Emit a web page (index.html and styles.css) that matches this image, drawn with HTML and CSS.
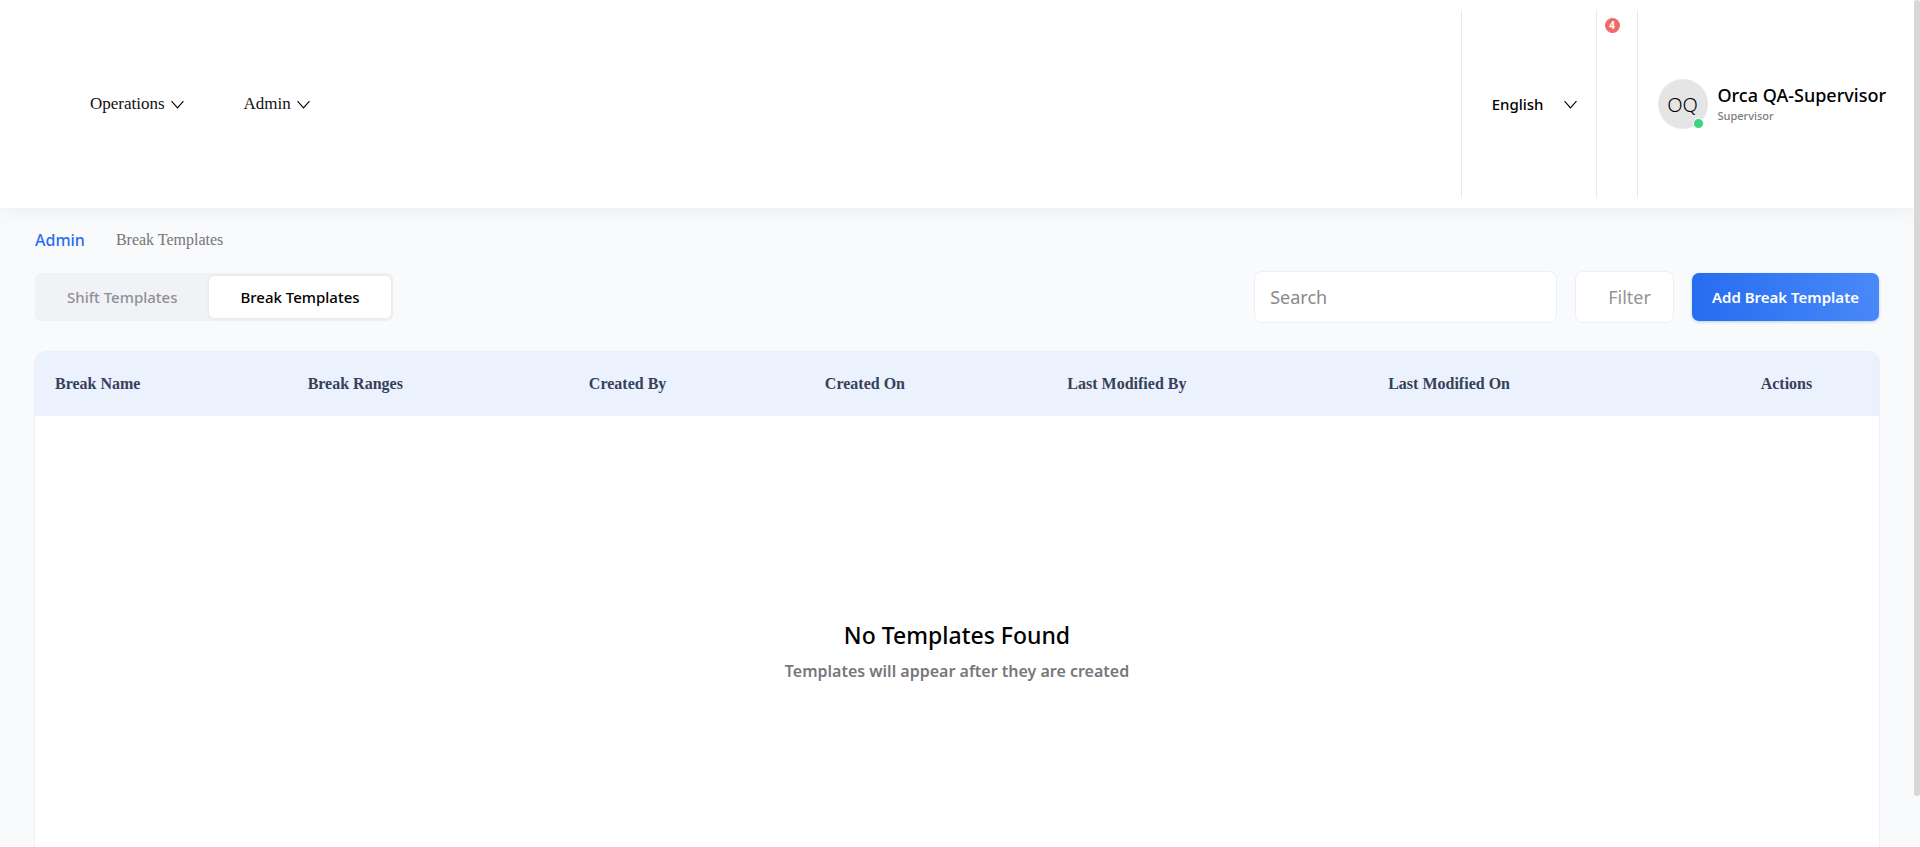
FILE: index.html
```html
<!DOCTYPE html>
<html lang="en">
<head>
<meta charset="utf-8">
<title>Break Templates</title>
<link rel="stylesheet" href="styles.css">
</head>
<body>
<header class="topbar">
  <nav class="nav">
    <button class="nav-item" type="button">Operations
      <svg class="chevron" viewBox="0 0 12 8" aria-hidden="true"><path d="M.5 .8 6 7.2 11.5 .8"/></svg>
    </button>
    <button class="nav-item" type="button">Admin
      <svg class="chevron" viewBox="0 0 12 8" aria-hidden="true"><path d="M.5 .8 6 7.2 11.5 .8"/></svg>
    </button>
  </nav>
  <div class="tools">
    <button class="language" type="button">English
      <svg class="chevron" viewBox="0 0 12 8" aria-hidden="true"><path d="M.5 .8 6 7.2 11.5 .8"/></svg>
    </button>
    <button class="alerts" type="button" aria-label="Notifications"><span class="alerts-count">4</span></button>
    <button class="profile" type="button">
      <span class="avatar">OQ<span class="status"></span></span>
      <span class="who">
        <span class="who-name">Orca QA-Supervisor</span>
        <span class="who-role">Supervisor</span>
      </span>
    </button>
  </div>
</header>
<main class="page">
  <nav class="crumbs" aria-label="Breadcrumb">
    <a class="crumb-link" href="#">Admin</a>
    <span class="crumb-current">Break Templates</span>
  </nav>
  <div class="toolbar">
    <div class="tabs" role="tablist">
      <button class="tab" type="button" role="tab" aria-selected="false">Shift Templates</button>
      <button class="tab tab-active" type="button" role="tab" aria-selected="true">Break Templates</button>
    </div>
    <div class="actions">
      <input class="search" type="text" placeholder="Search" aria-label="Search">
      <button class="filter" type="button">Filter</button>
      <button class="add" type="button">Add Break Template</button>
    </div>
  </div>
  <section class="card">
    <table class="grid">
      <thead>
        <tr>
          <th class="col-name">Break Name</th>
          <th class="col-ranges">Break Ranges</th>
          <th class="col-by">Created By</th>
          <th class="col-on">Created On</th>
          <th class="col-mod-by">Last Modified By</th>
          <th class="col-mod-on">Last Modified On</th>
          <th class="col-actions">Actions</th>
        </tr>
      </thead>
    </table>
    <div class="empty">
      <h2 class="empty-title">No Templates Found</h2>
      <p class="empty-text">Templates will appear after they are created</p>
    </div>
  </section>
</main>
<div class="scroll-thumb" aria-hidden="true"></div>
</body>
</html>
```
FILE: styles.css
```css
* { box-sizing: border-box; }

body {
  margin: 0;
  padding-right: 6px;
  min-height: 100vh;
  display: flex;
  flex-direction: column;
  background: #f9fafc;
  color: #000;
  font-family: "Noto Sans", "Open Sans", sans-serif;
}

button {
  margin: 0;
  padding: 0;
  border: 0;
  background: none;
  color: inherit;
  font: inherit;
  cursor: pointer;
}

.chevron {
  width: 13px;
  height: 9px;
  fill: none;
  stroke: #000;
  stroke-width: 1;
}

.topbar {
  display: flex;
  justify-content: space-between;
  padding: 10px 28px 10px 90px;
  height: 208px;
  background: #fff;
  box-shadow: 0 4px 20px rgba(0, 0, 0, 0.05);
}

.nav {
  display: flex;
  align-items: center;
  gap: 60px;
}

.nav-item {
  display: flex;
  align-items: center;
  gap: 6px;
  color: #111;
  font-family: "Liberation Serif", serif;
  font-size: 17px;
}

.tools { display: flex; }

.language {
  display: flex;
  align-items: center;
  gap: 20px;
  padding: 0 19px 0 30px;
  border-left: 1px solid #e9e9f5;
  font-size: 15px;
  font-weight: 500;
}

.alerts {
  display: flex;
  align-items: flex-start;
  width: 41px;
  padding: 8px;
  border-left: 1px solid #e9e9f5;
}

.alerts-count {
  width: 15px;
  height: 15px;
  border-radius: 50%;
  background: #f16a6a;
  color: #fff;
  font-size: 10px;
  font-weight: 700;
  line-height: 15px;
  text-align: center;
}

.profile {
  display: flex;
  align-items: center;
  gap: 10px;
  padding-left: 20px;
  border-left: 1px solid #e9e9f5;
  text-align: left;
}

.avatar {
  position: relative;
  width: 50px;
  height: 50px;
  border-radius: 50%;
  background: #e5e5e5;
  font-size: 20px;
  font-weight: 300;
  line-height: 52px;
  text-align: center;
}

.status {
  position: absolute;
  right: 4px;
  bottom: 0;
  width: 11px;
  height: 11px;
  border: 1px solid #fff;
  border-radius: 50%;
  background: #3dd27d;
}

.who {
  display: flex;
  flex-direction: column;
}

.who-name {
  font-size: 18px;
  font-weight: 500;
  line-height: 24px;
}

.who-role {
  color: #7c7c7c;
  font-size: 11px;
  font-weight: 500;
  line-height: 18px;
}

.page {
  flex: 1;
  display: flex;
  flex-direction: column;
  padding: 20px 34px 0;
}

.crumbs {
  display: flex;
  align-items: center;
  gap: 31px;
  height: 24px;
  padding-left: 1px;
}

.crumb-link {
  color: #2a6df0;
  font-size: 16px;
  font-weight: 500;
  text-decoration: none;
}

.crumb-current {
  color: #757575;
  font-family: "Liberation Serif", serif;
  font-size: 16px;
}

.toolbar {
  display: flex;
  justify-content: space-between;
  align-items: center;
  margin: 19px 1px 28px;
}

.tabs {
  display: flex;
  padding: 3px 2px 3px 0;
  border-radius: 6px;
  background: #f1f2f6;
}

.tab {
  height: 42px;
  padding: 0 32px;
  border-radius: 5px;
  color: #8f9096;
  font-size: 15px;
  font-weight: 500;
}

.tab-active {
  padding: 0 31px;
  background: #fff;
  box-shadow: 0 0 4px rgba(0, 0, 0, 0.08);
  color: #000;
}

.actions {
  display: flex;
  align-items: center;
  gap: 18px;
}

.search,
.filter {
  height: 52px;
  border: 1px solid #eceffb;
  border-radius: 8px;
  background: #fff;
}

.search {
  width: 303px;
  padding: 0 15px;
  font: 400 18px "Noto Sans", "Open Sans", sans-serif;
}

.search::placeholder { color: #8a8a8a; opacity: 1; }

.filter {
  padding: 0 22px 0 32px;
  color: #949494;
  font-size: 18px;
}

.add {
  height: 48px;
  padding: 0 20px;
  border-radius: 7px;
  background: linear-gradient(80deg, #266cf0, #4a89f8);
  box-shadow: 0 1px 3px rgba(38, 108, 240, 0.3);
  color: #fff;
  font-size: 15px;
  font-weight: 600;
}

.card {
  flex: 1;
  display: flex;
  flex-direction: column;
  border: 1px solid #eceffb;
  border-bottom: 0;
  border-radius: 12px 12px 0 0;
  background: #fff;
  overflow: hidden;
}

.grid {
  width: 100%;
  border-collapse: collapse;
  table-layout: fixed;
}

.grid th {
  height: 64px;
  padding: 0 20px;
  background: #ebf2fe;
  color: #36415a;
  font-family: "Liberation Serif", serif;
  font-size: 16px;
  font-weight: 700;
  text-align: left;
}

.col-name { width: 13.7%; }
.col-ranges { width: 15.25%; }
.col-by { width: 12.8%; }
.col-on { width: 13.15%; }
.col-mod-by { width: 17.4%; }
.col-mod-on { width: 20.2%; }

.empty {
  flex: 1;
  display: flex;
  flex-direction: column;
  align-items: center;
  padding-top: 200px;
}

.empty-title {
  margin: 0;
  font-size: 23px;
  font-weight: 500;
  line-height: 38px;
}

.empty-text {
  margin: 4px 0 0;
  color: #77777c;
  font-size: 16px;
  font-weight: 600;
  line-height: 26px;
}

.scroll-thumb {
  position: fixed;
  top: 0;
  right: 0;
  width: 6px;
  height: 94vh;
  border-radius: 3px;
  background: #d8d8d8;
}
```
